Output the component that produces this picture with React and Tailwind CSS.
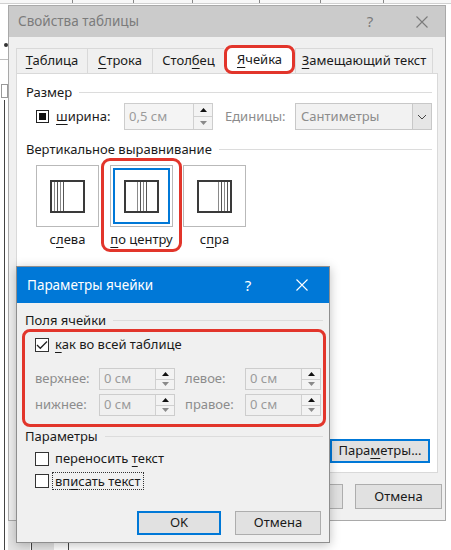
import React from "react";

const U = ({ children }) => <span className="underline decoration-1 underline-offset-[3px]">{children}</span>;

function CloseX({ color, size = 12 }) {
  return (
    <svg width={size} height={size} viewBox="0 0 12 12">
      <path d="M0.5 0.5 L11.5 11.5 M11.5 0.5 L0.5 11.5" stroke={color} strokeWidth="1.1" fill="none" />
    </svg>
  );
}

function SpinButtons() {
  return (
    <div className="flex w-[19px] flex-col border-l border-[#d0d0d0] bg-[#f3f3f3]">
      <div className="flex flex-1 items-center justify-center border-b border-[#d0d0d0]">
        <svg width="7" height="4" viewBox="0 0 7 4"><path d="M0 4 L3.5 0 L7 4Z" fill="#111" /></svg>
      </div>
      <div className="flex flex-1 items-center justify-center">
        <svg width="7" height="4" viewBox="0 0 7 4"><path d="M0 0 L3.5 4 L7 0Z" fill="#8a8a8a" /></svg>
      </div>
    </div>
  );
}

function CmField() {
  return (
    <div className="flex h-full w-[76px] border border-[#cdcdcd] bg-[#f0f0f0]">
      <div className="flex flex-1 items-center pl-[4px] text-[#9b9b9b]">0 см</div>
      <SpinButtons />
    </div>
  );
}

function GroupHeader({ label, className }) {
  return (
    <div className={"flex h-[18px] items-center " + className}>
      <span className="leading-[18px]">{label}</span>
      <div className="ml-[7px] h-px flex-1 bg-[#dcdcdc]" />
    </div>
  );
}

// small cell glyph: a square with a bunch of text lines pushed left / centre / right
function AlignBox({ justify, selected }) {
  return (
    <div className="h-[62px] w-[63px] border border-[#b9b9b9] bg-white p-[2px]">
      <div className={"flex h-full w-full items-center justify-center border-2 " + (selected ? "border-[#0078d7]" : "border-transparent")}>
        <div className={"flex h-[33px] w-[35px] border-2 border-[#3a3a3a] bg-white px-[2px] " + justify}>
          <div className="flex h-full gap-[2px]">
            <div className="h-full w-px bg-[#8a8a8a]" />
            <div className="h-full w-px bg-[#555]" />
            <div className="h-full w-px bg-[#8a8a8a]" />
            <div className="h-full w-px bg-[#555]" />
          </div>
        </div>
      </div>
    </div>
  );
}

function Checkbox({ checked }) {
  return (
    <div className="flex h-[14px] w-[14px] items-center justify-center border border-[#333] bg-white">
      {checked && (
        <svg width="12" height="10" viewBox="0 0 12 10">
          <path d="M1 5 L4.3 8.3 L11 1.5" stroke="#222" strokeWidth="1.3" fill="none" />
        </svg>
      )}
    </div>
  );
}

const tabBase = "flex h-[25px] items-center justify-center border-l border-t border-[#d9d9d9] bg-[#f0f0f0]";

export default function App() {
  return (
    <div className="relative h-[550px] w-[451px] overflow-hidden bg-white font-['Noto_Sans',sans-serif] text-[13px] text-[#1a1a1a]">
      {/* document behind the dialogs: ruler and table edges */}
      <div className="absolute left-0 top-0 flex h-[4px] w-full border-b border-[#d0d0d0] bg-[#f7f7f7]">
        <div className="ml-[72px] h-[3px] w-px bg-[#888]" />
        <div className="ml-[60px] h-[3px] w-px bg-[#888]" />
        <div className="ml-[58px] h-[3px] w-px bg-[#888]" />
        <div className="ml-[66px] h-[3px] w-px bg-[#888]" />
        <div className="ml-[60px] h-[3px] w-px bg-[#888]" />
        <div className="ml-[62px] h-[3px] w-px bg-[#888]" />
      </div>
      <div className="absolute left-0 top-[59px] h-px w-[8px] bg-[#bdbdbd]" />
      <div className="absolute left-[4px] top-[43px] h-[4px] w-[4px] rounded-full bg-[#333]" />
      <div className="absolute left-[1px] top-[84px] h-[14px] w-[7px] border border-[#999] bg-white" />
      <div className="absolute left-[4px] top-[100px] h-[450px] w-px bg-[#444]" />
      <div className="absolute left-[8px] top-[521px] h-[29px] w-[22px] bg-[#e4e4e4]" />
      <div className="absolute left-[31px] top-[521px] h-[29px] w-px bg-[#444]" />
      <div className="absolute left-[32px] top-[521px] h-[29px] w-[22px] bg-[#e4e4e4]" />
      <div className="absolute left-[68px] top-[521px] h-[29px] w-px bg-[#444]" />

      {/* Свойства таблицы */}
      <div className="ml-[8px] mt-[5px] flex h-[516px] w-[438px] flex-col border border-[#a9a9a9] bg-[#f0f0f0]">
        <div className="flex h-[31px] items-center bg-[#cbcbcb] pl-[9px] text-[13.5px] text-[#7b7b7b]">
          <span className="flex-1">Свойства таблицы</span>
          <span className="mr-[6px] w-[46px] text-center text-[15px]">?</span>
          <span className="flex w-[46px] justify-center"><CloseX color="#7b7b7b" /></span>
        </div>

        <div className="flex flex-1 flex-col px-[3px]">
          <div className="mx-[4px] mt-[8px] flex h-[28px] items-end">
            <div className={tabBase + " w-[71px]"}><span><U>Т</U>аблица</span></div>
            <div className={tabBase + " w-[65px]"}><span><U>С</U>трока</span></div>
            <div className={tabBase + " w-[72px]"}><span>Стол<U>б</U>ец</span></div>
            <div className="relative z-10 -mb-px flex h-[29px] w-[71px] items-center justify-center rounded-[8px] border-[3px] border-[#e2352b] bg-white">
              <span><U>Я</U>чейка</span>
            </div>
            <div className={tabBase + " w-[138px] border-r"}><span><U>З</U>амещающий текст</span></div>
          </div>

          <div className="mx-[4px] flex h-[400px] flex-col border border-[#d9d9d9] bg-white pl-[9px] pr-[5px]">
            <GroupHeader label="Размер" className="mt-[9px]" />
            <div className="mt-[2px] flex h-[27px] items-center pl-[10px]">
              <div className="flex h-[13px] w-[13px] items-center justify-center border border-[#222] bg-white p-[2px]">
                <div className="h-full w-full bg-[#111]" />
              </div>
              <span className="ml-[7px] w-[68px]"><U>ш</U>ирина:</span>
              <div className="flex h-full w-[89px] border border-[#cdcdcd] bg-[#f4f4f4]">
                <div className="flex flex-1 items-center pl-[4px] text-[#9b9b9b]">0,5 см</div>
                <SpinButtons />
              </div>
              <span className="ml-[12px] w-[70px] text-[#8c8c8c]">Единицы:</span>
              <div className="flex h-full w-[137px] border border-[#c8c8c8] bg-[#f2f2f2]">
                <div className="flex flex-1 items-center pl-[5px] text-[#8c8c8c]">Сантиметры</div>
                <div className="flex w-[19px] items-center justify-center border-l border-[#c8c8c8] bg-[#e6e6e6]">
                  <svg width="10" height="6" viewBox="0 0 10 6"><path d="M1 1 L5 5 L9 1" stroke="#444" fill="none" /></svg>
                </div>
              </div>
            </div>

            <GroupHeader label="Вертикальное выравнивание" className="mt-[10px]" />
            <div className="flex items-start pl-[10px]">
              <div className="mt-[7px] flex flex-col items-center">
                <AlignBox justify="justify-start" />
                <span className="mt-[3px] leading-[18px]">с<U>л</U>ева</span>
              </div>
              <div className="ml-[2px] flex flex-col items-center rounded-[9px] border-[3px] border-[#e2352b] px-[6px] pb-px pt-[4px]">
                <AlignBox justify="justify-center" selected />
                <span className="mt-[3px] leading-[18px]"><U>п</U>о центру</span>
              </div>
              <div className="ml-px mt-[7px] flex flex-col items-center">
                <AlignBox justify="justify-end" />
                <span className="mt-[3px] leading-[18px]">с<U>п</U>ра</span>
              </div>
            </div>

            <div className="mb-[9px] mr-[2px] mt-auto flex h-[24px] w-[100px] items-center justify-center self-end border-2 border-[#0078d7] bg-[#e1e1e1]">
              <span>Пара<U>м</U>етры...</span>
            </div>
          </div>

          <div className="mt-[11px] flex h-[25px] justify-end gap-[12px]">
            <div className="flex w-[86px] items-center justify-center border border-[#adadad] bg-[#e1e1e1]">ОК</div>
            <div className="flex w-[87px] items-center justify-center border border-[#adadad] bg-[#e1e1e1]">Отмена</div>
          </div>
        </div>
      </div>

      {/* Параметры ячейки */}
      <div className="absolute left-[16px] top-[266px] flex h-[277px] w-[314px] flex-col border border-[#8e8e8e] bg-[#f0f0f0] shadow-[0_2px_10px_rgba(0,0,0,0.25)]">
        <div className="flex h-[36px] items-center bg-[#0078d7] pl-[10px] text-[13.5px] text-white">
          <span className="flex-1">Параметры ячейки</span>
          <span className="mr-[38px] w-[20px] text-center text-[15px]">?</span>
          <span className="mr-[21px] flex w-[12px]"><CloseX color="#ffffff" /></span>
        </div>

        <GroupHeader label="Поля ячейки" className="ml-[8px] mr-[6px] mt-[8px]" />
        <div className="ml-[5px] mr-[3px] flex h-[98px] flex-col rounded-[8px] border-[3px] border-[#e2352b] pl-[10px] pt-[4px]">
          <div className="flex h-[18px] items-center">
            <Checkbox checked />
            <span className="ml-[6px]"><U>к</U>ак во всей таблице</span>
          </div>
          <div className="mt-[14px] flex h-[22px] items-center">
            <span className="w-[64px] text-[#8c8c8c]">верхнее:</span>
            <CmField />
            <span className="ml-[10px] w-[60px] text-[#8c8c8c]">левое:</span>
            <CmField />
          </div>
          <div className="mt-[4px] flex h-[22px] items-center">
            <span className="w-[64px] text-[#8c8c8c]">нижнее:</span>
            <CmField />
            <span className="ml-[10px] w-[60px] text-[#8c8c8c]">правое:</span>
            <CmField />
          </div>
        </div>

        <GroupHeader label="Параметры" className="ml-[8px] mr-[6px]" />
        <div className="ml-[18px] mt-[5px] flex h-[18px] items-center">
          <Checkbox />
          <span className="ml-[6px]">переносить <U>т</U>екст</span>
        </div>
        <div className="ml-[18px] mt-[4px] flex h-[18px] items-center">
          <Checkbox />
          <span className="ml-[3px] border border-dotted border-[#333] px-[2px] leading-[16px]">вп<U>и</U>сать текст</span>
        </div>

        <div className="mr-[8px] mt-[21px] flex h-[24px] justify-end gap-[14px]">
          <div className="flex w-[84px] items-center justify-center border-2 border-[#0078d7] bg-[#e1e1e1]">OK</div>
          <div className="flex w-[86px] items-center justify-center border border-[#adadad] bg-[#e1e1e1]">Отмена</div>
        </div>
      </div>
    </div>
  );
}
